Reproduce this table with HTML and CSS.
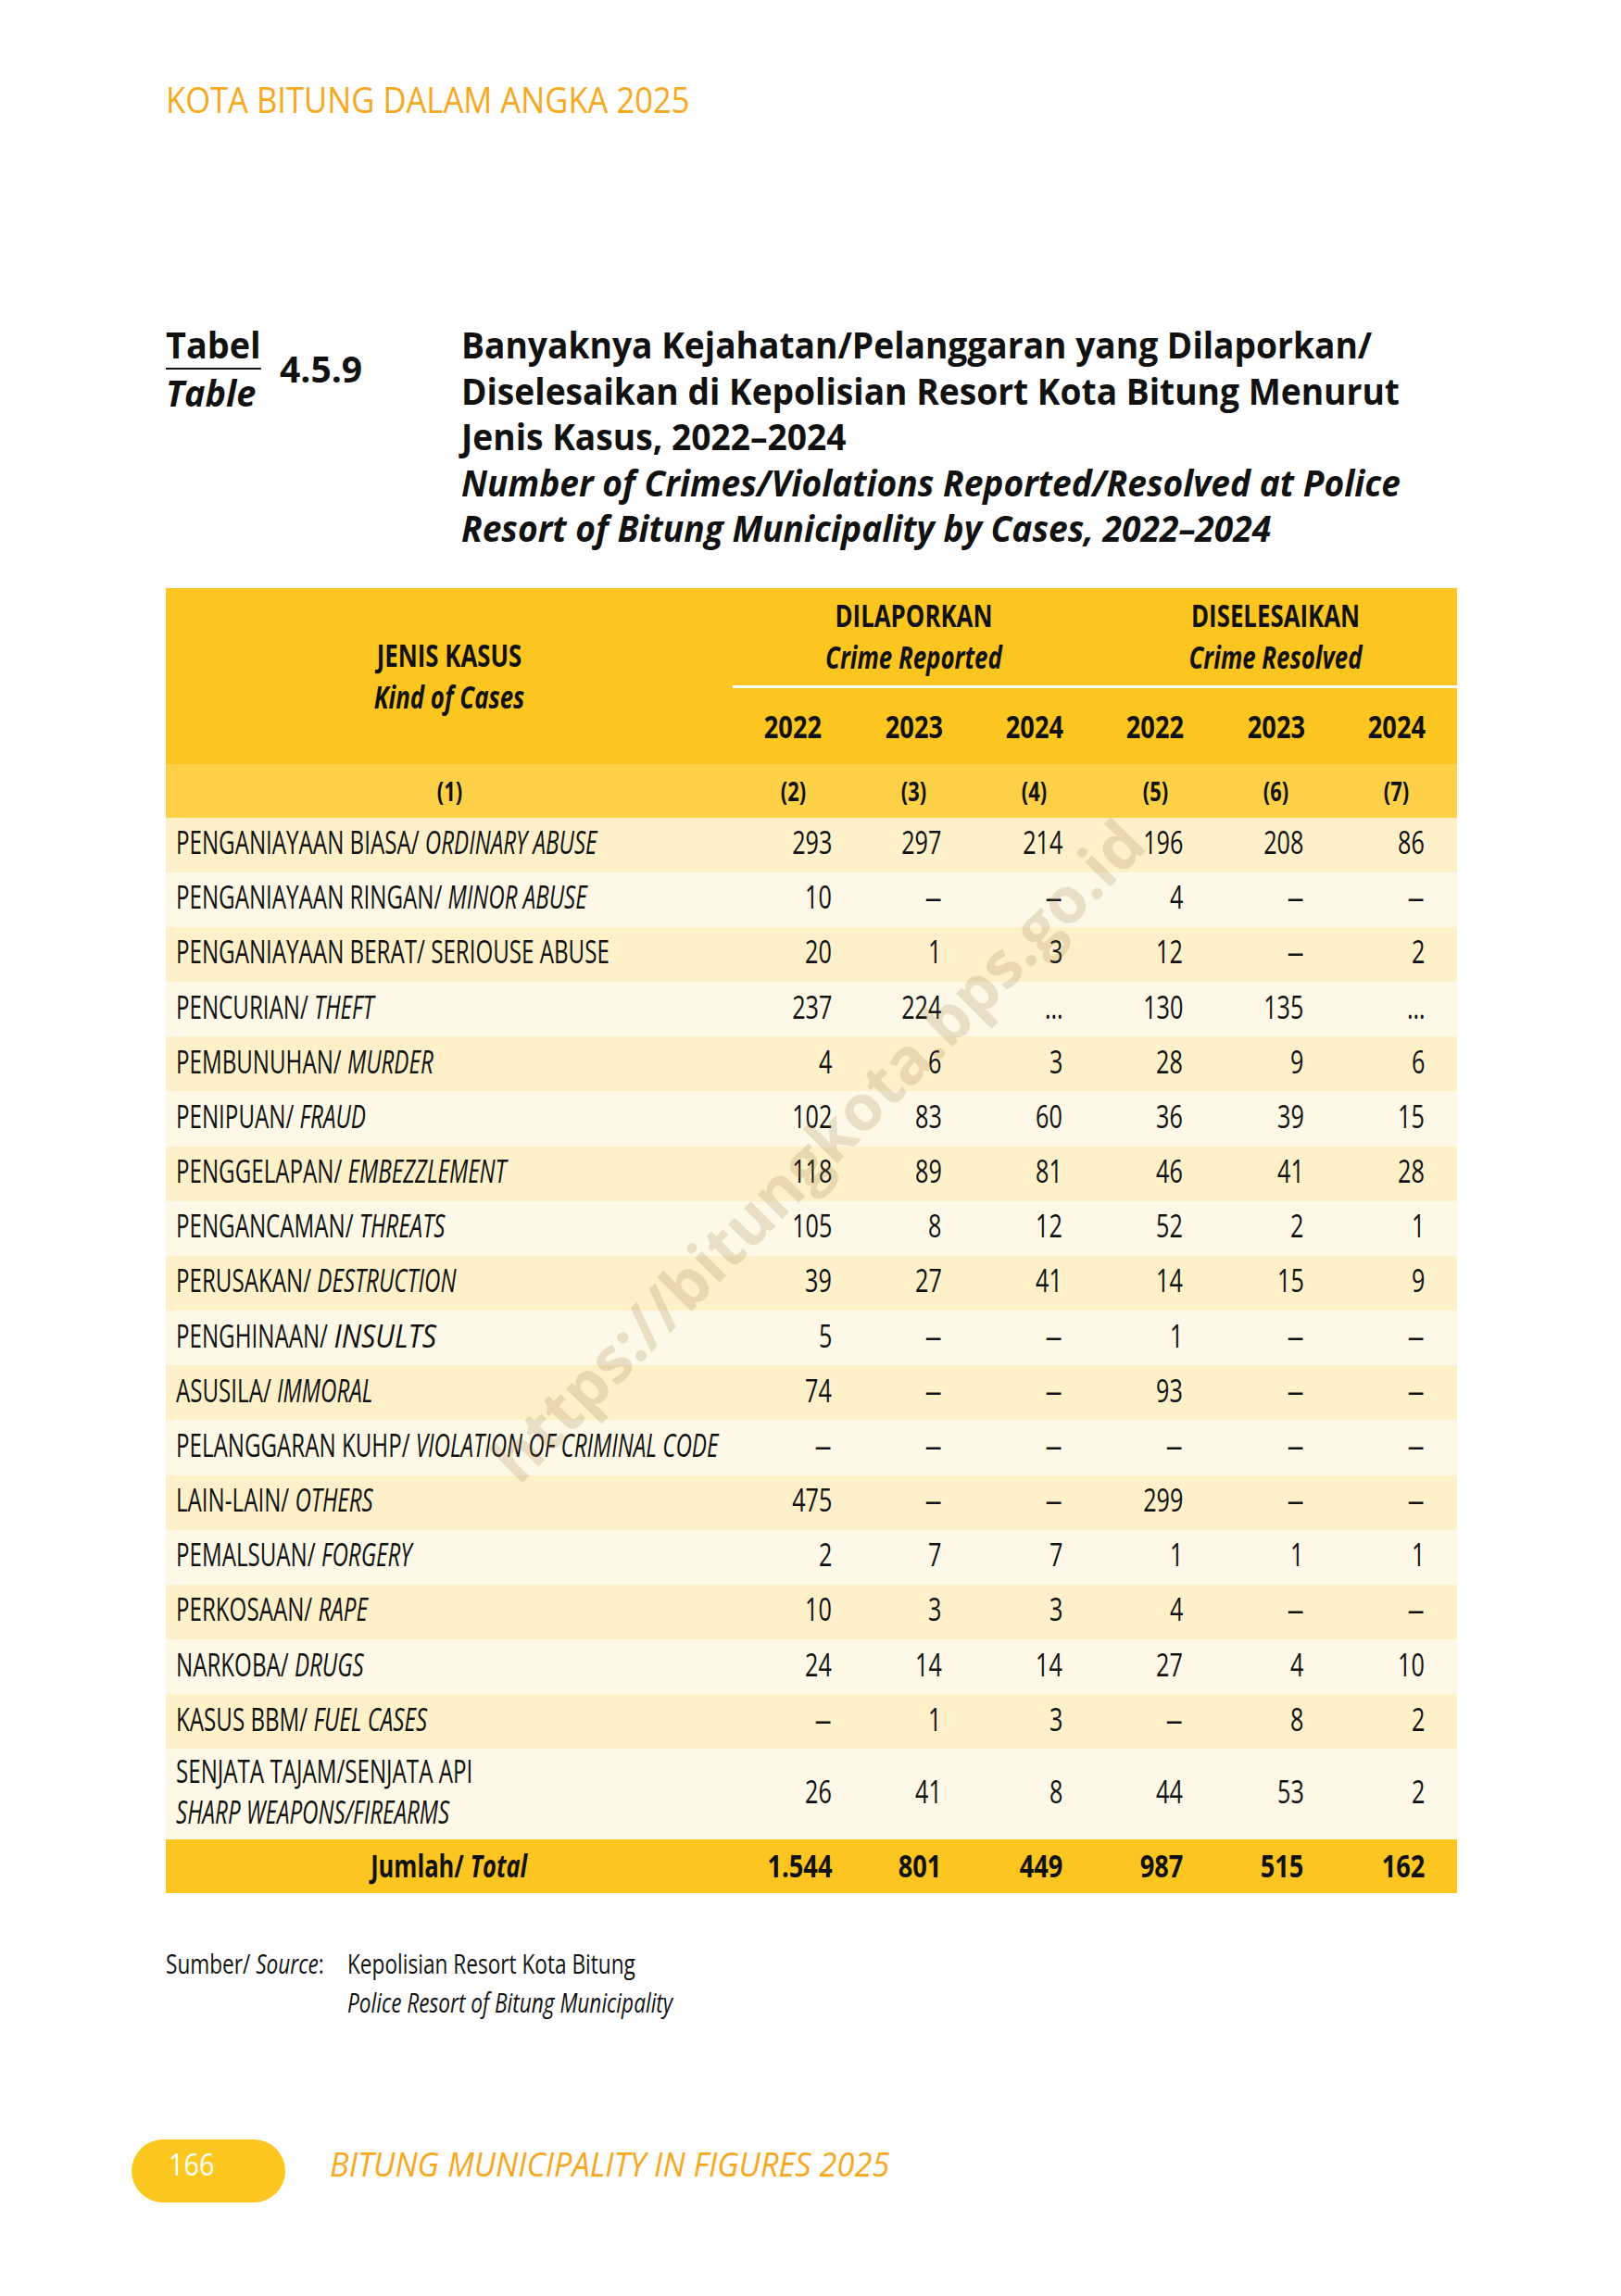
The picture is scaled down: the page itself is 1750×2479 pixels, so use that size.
FILE: index.html
```html
<!DOCTYPE html>
<html lang="id">
<head>
<meta charset="utf-8">
<title>Tabel 4.5.9</title>
<link rel="stylesheet" href="styles.css">
</head>
<body>
<div class="page">
  <header class="running"><span class="sx">KOTA BITUNG DALAM ANGKA 2025</span></header>

  <section class="caption">
    <div class="tlabel">
      <div class="tl-id"><span class="sx">Tabel</span></div>
      <div class="tl-en"><span class="sx">Table</span></div>
    </div>
    <div class="tnum">4.5.9</div>
    <div class="ttitle-wrap">
      <div class="ttitle">Banyaknya Kejahatan/Pelanggaran yang Dilaporkan/<br>Diselesaikan di Kepolisian Resort Kota Bitung Menurut<br>Jenis Kasus, 2022–2024<br><span class="en">Number of Crimes/Violations Reported/Resolved at Police<br>Resort of Bitung Municipality by Cases, 2022–2024</span></div>
    </div>
  </section>

  <table class="data">
    <colgroup>
      <col class="c1"><col><col><col><col><col><col>
    </colgroup>
    <thead>
      <tr class="h-grp">
        <th rowspan="2" class="kind"><span class="sx">JENIS KASUS<br><i>Kind of Cases</i></span></th>
        <th colspan="3" class="grp"><span class="sx">DILAPORKAN<br><i>Crime Reported</i></span></th>
        <th colspan="3" class="grp"><span class="sx">DISELESAIKAN<br><i>Crime Resolved</i></span></th>
      </tr>
      <tr class="h-year">
        <th><span class="sx">2022</span></th><th><span class="sx">2023</span></th><th><span class="sx">2024</span></th>
        <th><span class="sx">2022</span></th><th><span class="sx">2023</span></th><th><span class="sx">2024</span></th>
      </tr>
      <tr class="h-num">
        <th><span class="sx">(1)</span></th>
        <th><span class="sx">(2)</span></th><th><span class="sx">(3)</span></th><th><span class="sx">(4)</span></th>
        <th><span class="sx">(5)</span></th><th><span class="sx">(6)</span></th><th><span class="sx">(7)</span></th>
      </tr>
    </thead>
    <tbody>
      <tr><td class="lab"><span class="sx">PENGANIAYAAN BIASA/ <i>ORDINARY ABUSE</i></span></td><td class="n n1"><span class="sx">293</span></td><td class="n"><span class="sx">297</span></td><td class="n"><span class="sx">214</span></td><td class="n"><span class="sx">196</span></td><td class="n"><span class="sx">208</span></td><td class="n"><span class="sx">86</span></td></tr>
      <tr><td class="lab"><span class="sx">PENGANIAYAAN RINGAN/ <i>MINOR ABUSE</i></span></td><td class="n n1"><span class="sx">10</span></td><td class="n"><span class="sx d">–</span></td><td class="n"><span class="sx d">–</span></td><td class="n"><span class="sx">4</span></td><td class="n"><span class="sx d">–</span></td><td class="n"><span class="sx d">–</span></td></tr>
      <tr><td class="lab"><span class="sx">PENGANIAYAAN BERAT/ SERIOUSE ABUSE</span></td><td class="n n1"><span class="sx">20</span></td><td class="n"><span class="sx">1</span></td><td class="n"><span class="sx">3</span></td><td class="n"><span class="sx">12</span></td><td class="n"><span class="sx d">–</span></td><td class="n"><span class="sx">2</span></td></tr>
      <tr><td class="lab"><span class="sx">PENCURIAN/ <i>THEFT</i></span></td><td class="n n1"><span class="sx">237</span></td><td class="n"><span class="sx">224</span></td><td class="n"><span class="sx">…</span></td><td class="n"><span class="sx">130</span></td><td class="n"><span class="sx">135</span></td><td class="n"><span class="sx">…</span></td></tr>
      <tr><td class="lab"><span class="sx">PEMBUNUHAN/ <i>MURDER</i></span></td><td class="n n1"><span class="sx">4</span></td><td class="n"><span class="sx">6</span></td><td class="n"><span class="sx">3</span></td><td class="n"><span class="sx">28</span></td><td class="n"><span class="sx">9</span></td><td class="n"><span class="sx">6</span></td></tr>
      <tr><td class="lab"><span class="sx">PENIPUAN/ <i>FRAUD</i></span></td><td class="n n1"><span class="sx">102</span></td><td class="n"><span class="sx">83</span></td><td class="n"><span class="sx">60</span></td><td class="n"><span class="sx">36</span></td><td class="n"><span class="sx">39</span></td><td class="n"><span class="sx">15</span></td></tr>
      <tr><td class="lab"><span class="sx">PENGGELAPAN/ <i>EMBEZZLEMENT</i></span></td><td class="n n1"><span class="sx">118</span></td><td class="n"><span class="sx">89</span></td><td class="n"><span class="sx">81</span></td><td class="n"><span class="sx">46</span></td><td class="n"><span class="sx">41</span></td><td class="n"><span class="sx">28</span></td></tr>
      <tr><td class="lab"><span class="sx">PENGANCAMAN/ <i>THREATS</i></span></td><td class="n n1"><span class="sx">105</span></td><td class="n"><span class="sx">8</span></td><td class="n"><span class="sx">12</span></td><td class="n"><span class="sx">52</span></td><td class="n"><span class="sx">2</span></td><td class="n"><span class="sx">1</span></td></tr>
      <tr><td class="lab"><span class="sx">PERUSAKAN/ <i>DESTRUCTION</i></span></td><td class="n n1"><span class="sx">39</span></td><td class="n"><span class="sx">27</span></td><td class="n"><span class="sx">41</span></td><td class="n"><span class="sx">14</span></td><td class="n"><span class="sx">15</span></td><td class="n"><span class="sx">9</span></td></tr>
      <tr><td class="lab"><span class="sx">PENGHINAAN/ <i class="wide">INSULTS</i></span></td><td class="n n1"><span class="sx">5</span></td><td class="n"><span class="sx d">–</span></td><td class="n"><span class="sx d">–</span></td><td class="n"><span class="sx">1</span></td><td class="n"><span class="sx d">–</span></td><td class="n"><span class="sx d">–</span></td></tr>
      <tr><td class="lab"><span class="sx">ASUSILA/ <i>IMMORAL</i></span></td><td class="n n1"><span class="sx">74</span></td><td class="n"><span class="sx d">–</span></td><td class="n"><span class="sx d">–</span></td><td class="n"><span class="sx">93</span></td><td class="n"><span class="sx d">–</span></td><td class="n"><span class="sx d">–</span></td></tr>
      <tr><td class="lab"><span class="sx">PELANGGARAN KUHP/ <i>VIOLATION OF CRIMINAL CODE</i></span></td><td class="n n1"><span class="sx d">–</span></td><td class="n"><span class="sx d">–</span></td><td class="n"><span class="sx d">–</span></td><td class="n"><span class="sx d">–</span></td><td class="n"><span class="sx d">–</span></td><td class="n"><span class="sx d">–</span></td></tr>
      <tr><td class="lab"><span class="sx">LAIN-LAIN/ <i>OTHERS</i></span></td><td class="n n1"><span class="sx">475</span></td><td class="n"><span class="sx d">–</span></td><td class="n"><span class="sx d">–</span></td><td class="n"><span class="sx">299</span></td><td class="n"><span class="sx d">–</span></td><td class="n"><span class="sx d">–</span></td></tr>
      <tr><td class="lab"><span class="sx">PEMALSUAN/ <i>FORGERY</i></span></td><td class="n n1"><span class="sx">2</span></td><td class="n"><span class="sx">7</span></td><td class="n"><span class="sx">7</span></td><td class="n"><span class="sx">1</span></td><td class="n"><span class="sx">1</span></td><td class="n"><span class="sx">1</span></td></tr>
      <tr><td class="lab"><span class="sx">PERKOSAAN/ <i>RAPE</i></span></td><td class="n n1"><span class="sx">10</span></td><td class="n"><span class="sx">3</span></td><td class="n"><span class="sx">3</span></td><td class="n"><span class="sx">4</span></td><td class="n"><span class="sx d">–</span></td><td class="n"><span class="sx d">–</span></td></tr>
      <tr><td class="lab"><span class="sx">NARKOBA/ <i>DRUGS</i></span></td><td class="n n1"><span class="sx">24</span></td><td class="n"><span class="sx">14</span></td><td class="n"><span class="sx">14</span></td><td class="n"><span class="sx">27</span></td><td class="n"><span class="sx">4</span></td><td class="n"><span class="sx">10</span></td></tr>
      <tr><td class="lab"><span class="sx">KASUS BBM/ <i>FUEL CASES</i></span></td><td class="n n1"><span class="sx d">–</span></td><td class="n"><span class="sx">1</span></td><td class="n"><span class="sx">3</span></td><td class="n"><span class="sx d">–</span></td><td class="n"><span class="sx">8</span></td><td class="n"><span class="sx">2</span></td></tr>
      <tr class="tall"><td class="lab"><span class="sx">SENJATA TAJAM/SENJATA API<br><i>SHARP WEAPONS/FIREARMS</i></span></td><td class="n n1"><span class="sx">26</span></td><td class="n"><span class="sx">41</span></td><td class="n"><span class="sx">8</span></td><td class="n"><span class="sx">44</span></td><td class="n"><span class="sx">53</span></td><td class="n"><span class="sx">2</span></td></tr>
    </tbody>
    <tfoot>
      <tr class="total"><td class="tlab"><span class="sx">Jumlah/ <i>Total</i></span></td><td class="n n1"><span class="sx">1.544</span></td><td class="n"><span class="sx">801</span></td><td class="n"><span class="sx">449</span></td><td class="n"><span class="sx">987</span></td><td class="n"><span class="sx">515</span></td><td class="n"><span class="sx">162</span></td></tr>
    </tfoot>
  </table>

  <section class="source">
    <div class="src-k"><span class="sx">Sumber/ <i>Source</i>:</span></div>
    <div class="src-v"><span class="sx">Kepolisian Resort Kota Bitung<br><i>Police Resort of Bitung Municipality</i></span></div>
  </section>

  <footer class="foot">
    <div class="pill"><span class="sx">166</span></div>
    <div class="foot-text"><span class="sx">BITUNG MUNICIPALITY IN FIGURES 2025</span></div>
  </footer>

  <div class="watermark">https://bitungkota.bps.go.id</div>
</div>
</body>
</html>
```

FILE: styles.css
```css
* { box-sizing: border-box; margin: 0; padding: 0; }

body {
  background: #ffffff;
  font-family: "Open Sans", "Noto Sans", "Liberation Sans", sans-serif;
  color: #111111;
}

.page {
  position: relative;
  width: 1750px;
  height: 2479px;
  padding-left: 179px;
  overflow: hidden;
}

.sx {
  display: inline-block;
  white-space: nowrap;
}

/* running head */
.running {
  padding-top: 87px;
  font-size: 38px;
  line-height: 40px;
  color: #F6A81E;
}
.running .sx { transform: scaleX(0.91); transform-origin: left center; }

/* caption */
.caption {
  display: grid;
  grid-template-columns: 123px 196px 1fr;
  margin-top: 220px;
  font-weight: 700;
  font-size: 39px;
  line-height: 49.5px;
  color: #111111;
}
.tl-id .sx {
  border-bottom: 2px solid #111111;
  transform: scaleX(0.97);
  transform-origin: left center;
}
.tl-en .sx {
  font-style: italic;
  transform: scaleX(0.97);
  transform-origin: left center;
}
.tnum { padding-top: 26px; }
.ttitle {
  white-space: nowrap;
  transform: scaleX(0.953);
  transform-origin: left top;
}
.ttitle .en { font-style: italic; }

/* table */
.data {
  margin-top: 40px;
  width: 1394px;
  border-collapse: separate;
  border-spacing: 0;
  table-layout: fixed;
  font-size: 34px;
  line-height: 40px;
}
.data col.c1 { width: 612px; }

.data th {
  font-weight: 700;
  background: #FCC51F;
  text-align: center;
  vertical-align: middle;
  padding: 0;
}
.data th .sx { transform: scaleX(0.76); transform-origin: center center; }
.data th i { font-style: italic; }

.data .h-grp { height: 108px; }
.data .h-grp th { line-height: 45px; }
.data .h-grp th.grp { border-bottom: 3px solid #ffffff; }
.data .h-year { height: 82px; }
.data .h-year th .sx { transform: scaleX(0.8); }
.data .h-num { height: 58px; }
.data .h-num th {
  background: #FCD147;
  font-size: 28px;
  line-height: 30px;
}
.data .h-num th .sx { transform: scaleX(0.78); }

.data td {
  padding: 0 0 6px 0;
  vertical-align: middle;
  white-space: nowrap;
  font-weight: 500;
}
.data tbody tr { height: 59.18px; }
.data tbody tr:nth-child(odd) td { background: #FEF0C9; }
.data tbody tr:nth-child(even) td { background: #FEF8E6; }
.data tbody tr.tall { height: 98px; }
.data tbody tr.tall td.lab { line-height: 44px; }

.data td.lab { padding-left: 11px; text-align: left; }
.data td.lab .sx { transform: scaleX(0.71); transform-origin: left center; }
.data td.lab i { font-style: italic; }
.data td.lab i.wide {
  display: inline-block;
  transform: scaleX(1.26);
  transform-origin: left center;
}

.data td.n { text-align: right; padding-right: 35px; }
.data td.n.n1 { padding-right: 23px; }
.data td.n .sx { transform: scaleX(0.74); transform-origin: right center; }
.data td.n .sx.d { transform: scaleX(1.1); }

.data .total { height: 58px; }
.data .total td {
  background: #FCC51F;
  font-weight: 700;
  padding-bottom: 3px;
}
.data .total td.tlab { text-align: center; }
.data .total td.tlab .sx { transform: scaleX(0.75); transform-origin: center center; }
.data .total td.n .sx { transform: scaleX(0.8); }

/* source */
.source {
  margin-top: 55px;
  display: grid;
  grid-template-columns: 196px 1fr;
  font-size: 29px;
  line-height: 42px;
  color: #111111;
}
.source .sx { transform: scaleX(0.78); transform-origin: left top; }

/* footer */
.foot {
  margin-top: 127px;
  display: flex;
  align-items: flex-start;
  gap: 48px;
}
.pill {
  margin-left: -37px;
  width: 166px;
  height: 68px;
  border-radius: 34px;
  background: #FCC71F;
  color: #ffffff;
  font-size: 32px;
  line-height: 40px;
  padding-top: 7px;
  padding-left: 40px;
}
.pill .sx { transform: scaleX(0.9); transform-origin: left center; }
.foot-text {
  margin-top: 7px;
  font-size: 36px;
  line-height: 40px;
  font-style: italic;
  color: #F6A81E;
}
.foot-text .sx { transform: scaleX(0.955); transform-origin: left center; }

/* watermark */
.watermark {
  position: absolute;
  left: 881px;
  top: 1241px;
  transform: translate(-50%, -50%) rotate(-45.4deg);
  font-size: 69px;
  font-weight: 700;
  white-space: nowrap;
  color: rgba(150, 120, 70, 0.2);
  pointer-events: none;
}
```
